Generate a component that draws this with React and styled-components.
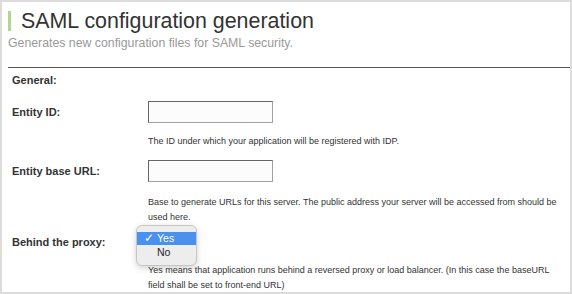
import React from "react";
import styled, { createGlobalStyle } from "styled-components";

const Global = createGlobalStyle`
  html, body { margin: 0; padding: 0; background: #fff; }
  body { font-family: "Liberation Sans", Arial, Helvetica, sans-serif; }
  * { box-sizing: border-box; }
`;

const Page = styled.div`
  width: 572px;
  height: 294px;
  border: 2px solid #dcdcdc;
  background: #fff;
  overflow: hidden;
  padding-top: 9px;
`;

const Header = styled.header`
  margin-left: 6px;
  border-bottom: 1px solid #555;
  padding-bottom: 16px;
`;

const Title = styled.h1`
  margin: 0;
  border-left: 3px solid #b3d68f;
  padding-left: 10px;
  font-size: 21.4px;
  line-height: 20px;
  font-weight: normal;
  color: #333;
`;

const Subtitle = styled.p`
  margin: 5px 0 0;
  font-size: 12.3px;
  line-height: 15px;
  color: #999;
`;

const Form = styled.form`
  padding: 5px 0 0 10px;
  color: #333;
`;

const Section = styled.div`
  font-size: 11px;
  line-height: 15px;
  font-weight: bold;
  margin-bottom: 13px;
`;

const Field = styled.div`
  display: grid;
  grid-template-columns: 136px 412px;
  align-items: center;
  margin-bottom: ${(p) => p.$gap ?? 11}px;
`;

const Label = styled.label`
  font-size: 11px;
  line-height: 15px;
  font-weight: bold;
`;

const Input = styled.input`
  width: 125px;
  height: 22px;
  margin: 0;
  border: 1px solid;
  border-color: #666 #a0a0a0 #a0a0a0 #666;
  background: #fcfcfc;
  padding: 2px 4px;
  font: inherit;
`;

const Help = styled.div`
  grid-column: 2;
  margin-top: ${(p) => p.$top ?? 11}px;
  font-size: 9px;
  line-height: 15px;
  color: #333;
`;

const SelectWrap = styled.div`
  position: relative;
  height: 18px;
`;

const Popup = styled.ul`
  position: absolute;
  left: -12px;
  top: -8px;
  width: 61px;
  margin: 0;
  padding: 6px 0;
  list-style: none;
  background: #ededed;
  border: 1px solid #c6c6c6;
  border-radius: 6px;
  box-shadow: 0 2px 6px rgba(0, 0, 0, 0.18);
  font-size: 10.5px;
`;

const Option = styled.li`
  position: relative;
  height: 13px;
  line-height: 13px;
  padding-left: 20px;
  background: ${(p) => (p.$active ? "#4a90ee" : "transparent")};
  color: ${(p) => (p.$active ? "#fff" : "#222")};
  & + & {
    margin-top: 1px;
  }
`;

const Check = styled.span`
  position: absolute;
  left: 7px;
  top: 0;
  font-size: 12px;
`;

export default function App() {
  return (
    <>
      <Global />
      <Page>
        <Header>
          <Title>SAML configuration generation</Title>
          <Subtitle>Generates new configuration files for SAML security.</Subtitle>
        </Header>
        <Form>
          <Section>General:</Section>
          <Field>
            <Label>Entity ID:</Label>
            <Input type="text" />
            <Help>The ID under which your application will be registered with IDP.</Help>
          </Field>
          <Field $gap={8}>
            <Label>Entity base URL:</Label>
            <Input type="text" />
            <Help $top={13}>
              Base to generate URLs for this server. The public address your server will be accessed from should be used here.
            </Help>
          </Field>
          <Field $gap={0}>
            <Label>Behind the proxy:</Label>
            <SelectWrap>
              <Popup>
                <Option $active>
                  <Check>✓</Check>Yes
                </Option>
                <Option>No</Option>
              </Popup>
            </SelectWrap>
            <Help $top={12}>
              Yes means that application runs behind a reversed proxy or load balancer. (In this case the baseURL field shall be set to front-end URL)
            </Help>
          </Field>
        </Form>
      </Page>
    </>
  );
}
